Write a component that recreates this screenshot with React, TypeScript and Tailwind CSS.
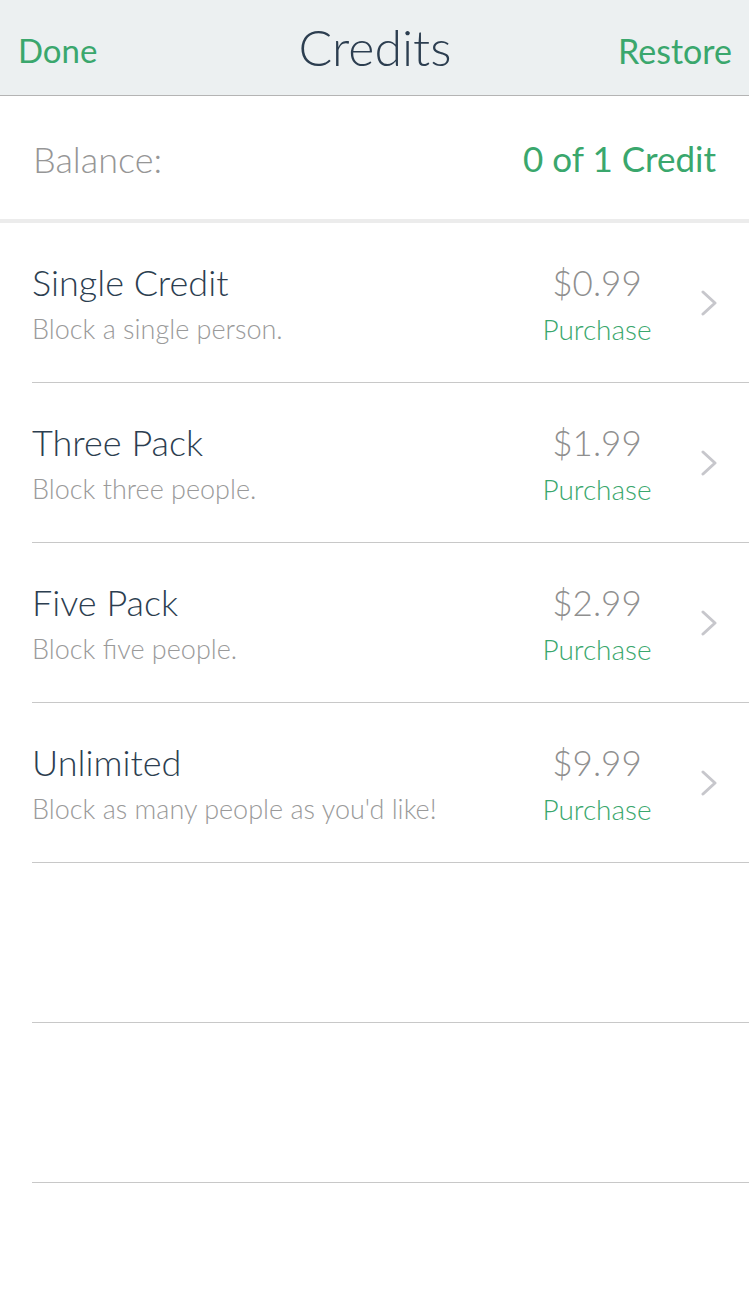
import React from 'react';

const packs = [
  { title: 'Single Credit', desc: 'Block a single person.', price: '$0.99' },
  { title: 'Three Pack', desc: 'Block three people.', price: '$1.99' },
  { title: 'Five Pack', desc: 'Block five people.', price: '$2.99' },
  { title: 'Unlimited', desc: "Block as many people as you'd like!", price: '$9.99' },
];

function Chevron() {
  return (
    <svg width="18" height="26" viewBox="0 0 18 26" fill="none">
      <path d="M3 2 L15 13 L3 24" stroke="#c7c7cc" strokeWidth="3" strokeLinecap="round" strokeLinejoin="round" />
    </svg>
  );
}

export default function App() {
  return (
    <div className="w-[749px] h-[1301px] bg-white overflow-hidden font-['Lato',sans-serif]">
      {/* Nav bar */}
      <div className="h-[96px] bg-[#ecf0f1] border-b border-[#b4b4b4] flex items-center justify-between pl-[18px] pr-[17px]">
        <span className="text-[33px] text-[#3aa76d] w-[140px] mt-[6px]">Done</span>
        <span className="text-[50px] font-light text-[#2c3e50]">Credits</span>
        <span className="text-[34px] text-[#3aa76d] w-[140px] text-right mt-[6px]">Restore</span>
      </div>

      {/* Balance */}
      <div className="h-[127px] flex items-center justify-between pl-[33px] pr-[33px] pt-[2px] border-b-[4px] border-[#ececec]">
        <span className="text-[36px] font-light text-[#969696]">Balance:</span>
        <span className="text-[35px] text-[#3aa76d]">0 of 1 Credit</span>
      </div>

      {/* Packs */}
      <div className="pl-[32px]">
        {packs.map((p) => (
          <div key={p.title} className="h-[160px] flex items-center border-b border-[#c8c8c8]">
            <div className="flex-1 flex flex-col">
              <span className="text-[36px] font-light text-[#2c3e50] leading-[46px]">{p.title}</span>
              <span className="text-[27px] font-light text-[#9a9a9a] leading-[36px] mt-[6px]">{p.desc}</span>
            </div>
            <div className="w-[140px] flex flex-col items-center">
              <span className="text-[35px] font-light text-[#8f8f8f] leading-[46px]">{p.price}</span>
              <span className="text-[28px] font-light text-[#3aa76d] leading-[36px] mt-[6px]">Purchase</span>
            </div>
            <div className="ml-[33px] mr-[31px] flex items-center">
              <Chevron />
            </div>
          </div>
        ))}
        <div className="h-[160px] border-b border-[#c8c8c8]" />
        <div className="h-[160px] border-b border-[#c8c8c8]" />
      </div>
    </div>
  );
}
